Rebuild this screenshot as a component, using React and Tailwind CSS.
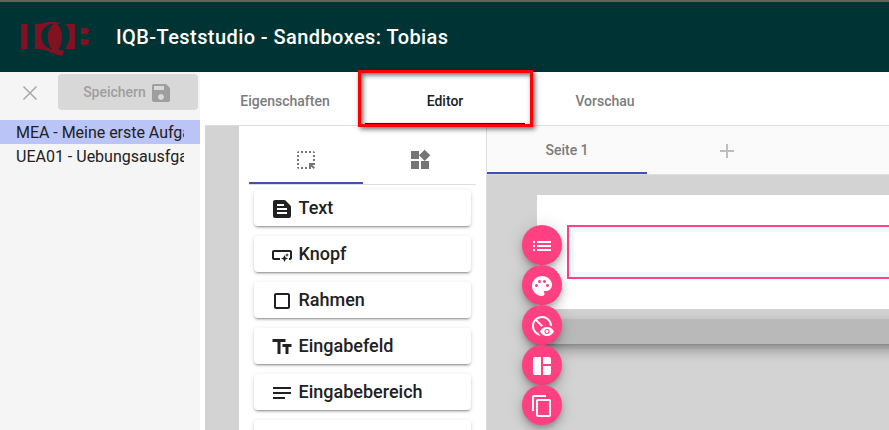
import React from 'react';
import {
  MdHighlightAlt, MdWidgets, MdTextSnippet, MdSmartButton, MdCropSquare, MdTextFields, MdNotes,
  MdList, MdPalette, MdDisabledVisible, MdSpaceDashboard, MdContentCopy, MdSave,
} from 'react-icons/md';

const elements = [
  ['Text', MdTextSnippet],
  ['Knopf', MdSmartButton],
  ['Rahmen', MdCropSquare],
  ['Eingabefeld', MdTextFields],
  ['Eingabebereich', MdNotes],
  ['', null],
];

const actions = [MdList, MdPalette, MdDisabledVisible, MdSpaceDashboard, MdContentCopy];

function Logo() {
  return (
    <svg width="70" height="38" viewBox="0 0 70 38" fill="#821122">
      <path d="M1 6h6.500v25H1z" />
      <path d="M15 6h5.500Q28 3 35 4Q40 4.500 43 6H55v25H42L44 33l-1.500 5Q35 37 29 33.500Q24 31 20 31H15z" />
      <path fill="#003333" d="M34 5.500C18 7 17 27 32 31.500C26 25 26 11 34 5.500z" />
      <path fill="#003333" d="M37 5.500C43 11 44 25 38 31.500L43 32.500C52 26 52 8 43.500 5.500z" />
      <path d="M61 10h5q3 0 3 3t-3 3h-5zM61 21h5q3 0 3 3t-3 3h-5z" />
    </svg>
  );
}

function PlusIcon() {
  return <svg className="size-6" viewBox="0 0 24 24" fill="#bdbdbd"><path d="M19 13h-6v6h-2v-6H5v-2h6V5h2v6h6z" /></svg>;
}

export default function App() {
  return (
    <div className="relative flex h-[430px] w-[889px] flex-col overflow-hidden bg-white font-[Roboto,sans-serif] text-[#212121]">
      <header className="flex h-[72px] shrink-0 items-center border-t-2 border-[#68635a] bg-[#003333] pl-5">
        <Logo />
        <h1 className="ml-[26px] text-[20px] font-medium leading-6 tracking-[0.42px] text-white">IQB-Teststudio - Sandboxes: Tobias</h1>
      </header>
      <div className="flex min-h-0 flex-1">
        <aside className="w-[200px] shrink-0 bg-[#f5f5f5]">
          <div className="flex h-12 pt-[2px]">
            <svg className="ml-[18px] mt-[7px] size-6" viewBox="0 0 24 24" stroke="#a8a8a8" strokeWidth="1.5"><path d="M5.500 5.500l13 13M18.500 5.500l-13 13" /></svg>
            <button className="ml-4 flex h-9 w-[140px] items-center justify-center rounded bg-[#d8d8d8] text-sm font-medium text-[#9e9e9e]">
              Speichern<MdSave className="ml-[3px] mt-0.5 size-6" />
            </button>
          </div>
          <div className="h-6 bg-[#bac4f7] px-4 leading-[25px] tracking-[-0.03px]"><div className="overflow-hidden whitespace-nowrap">MEA - Meine erste Aufgabe</div></div>
          <div className="h-6 px-4 leading-[25px]"><div className="overflow-hidden whitespace-nowrap">UEA01 - Uebungsausfgabe</div></div>
        </aside>
        <main className="ml-[5px] flex min-w-0 flex-1 flex-col">
          <nav className="flex h-[54px] shrink-0 border-b border-[#dedede] pt-[5px] text-sm font-medium leading-[48px] text-[#7b7b7b]">
            <div className="w-40 text-center">Eigenschaften</div>
            <div className="w-40 border-b-2 border-[#003333] text-center text-[#212121]">Editor</div>
            <div className="w-40 text-center">Vorschau</div>
          </nav>
          <div className="flex min-h-0 flex-1">
            <div className="w-[34px] shrink-0 bg-[#d3d3d3]" />
            <section className="w-[247px] shrink-0 px-[10px] pt-[9px]">
              <div className="flex h-[50px] border-b border-[#dedede] text-[#757575]">
                <div className="flex h-[49px] w-[114px] items-center justify-center border-b-2 border-[#3f51b5] pt-[3px]"><MdHighlightAlt className="size-6" /></div>
                <div className="flex h-[49px] w-[113px] items-center justify-center pt-px"><MdWidgets className="size-6" /></div>
              </div>
              <div className="flex flex-col gap-[10px] px-[5px] pt-[5px]">
                {elements.map(([label, Icon], i) => (
                  <button key={i} className="flex h-9 items-center rounded bg-white pl-4 text-[18px] font-medium shadow-[0_3px_1px_-2px_rgba(0,0,0,0.2),0_2px_2px_0_rgba(0,0,0,0.14),0_1px_5px_0_rgba(0,0,0,0.12)]">
                    {Icon && <Icon className="mr-[4.5px] mt-0.5 size-6" />}<span className="pb-0.5">{label}</span>
                  </button>
                ))}
              </div>
            </section>
            <section className="relative flex min-w-0 flex-1 flex-col border-l border-[#dedede] bg-[#d3d3d3]">
              <div className="flex h-[49px] shrink-0 border-b border-[#dedede] bg-[#fafafa] text-sm font-medium text-[#7b7b7b]">
                <div className="w-40 border-b-2 border-[#3f51b5] text-center leading-[48px]">Seite 1</div>
                <div className="flex w-40 items-center justify-center pt-0.5"><PlusIcon /></div>
              </div>
              <div className="-mr-10 ml-[50px] mt-5 flex shrink-0 flex-col">
                <div className="relative h-[114px] bg-white pl-[30px] pt-[30px]">
                  <div className="h-[54px] border-2 border-r-0 border-[#ff4081] bg-[#f0f8ff] py-[5px] pl-[5px]"><div className="h-10 bg-white" /></div>
                </div>
                <div className="mt-[10px] h-[25px] bg-[#b9b9b9] shadow-[0_5px_5px_-3px_rgba(0,0,0,0.2),0_8px_10px_1px_rgba(0,0,0,0.14),0_3px_14px_2px_rgba(0,0,0,0.12)]" />
              </div>
              <div className="absolute left-[35px] top-[99px] flex flex-col">
                {actions.map((Icon, i) => (
                  <button key={i} className="flex size-10 items-center justify-center rounded-full bg-[#ff4081] pt-0.5 text-white shadow-[0_3px_5px_-1px_rgba(0,0,0,0.2),0_6px_10px_0_rgba(0,0,0,0.14),0_1px_18px_0_rgba(0,0,0,0.12)]">
                    <Icon className="size-6" />
                  </button>
                ))}
              </div>
            </section>
          </div>
        </main>
      </div>
      <div className="absolute left-[358px] top-[70px] h-[57px] w-[175px] border-[3px] border-[#ff0000] shadow-[2px_2px_5px_rgba(0,0,0,0.6),inset_2px_2px_5px_rgba(0,0,0,0.6)]" />
    </div>
  );
}
